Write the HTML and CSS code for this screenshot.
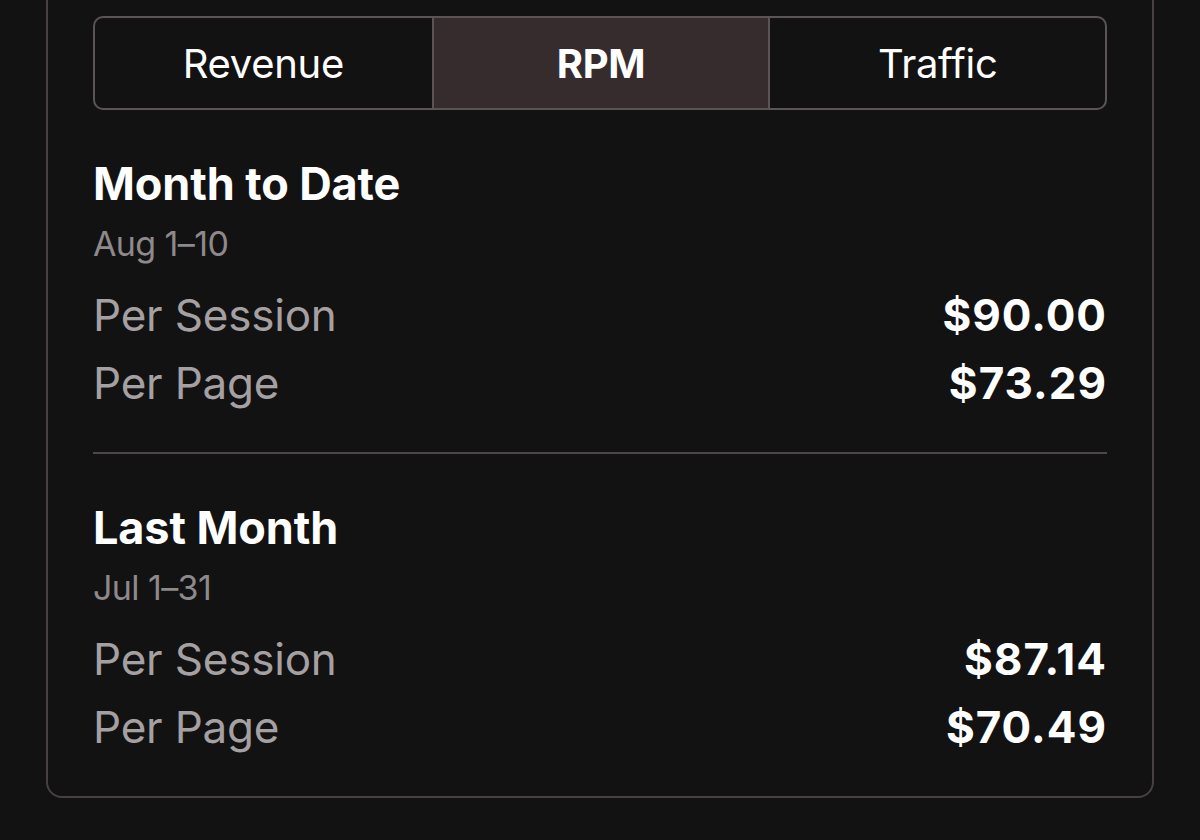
FILE: index.html
```html
<!DOCTYPE html>
<html lang="en">
<head>
    <meta charset="UTF-8">
    <meta name="viewport" content="width=device-width, initial-scale=1.0">
    <title>RPM Overview</title>
    <link rel="stylesheet" href="styles.css">
</head>
<body>
    <div class="card">
        <div class="tabs">
            <button class="tab">Revenue</button>
            <button class="tab active">RPM</button>
            <button class="tab">Traffic</button>
        </div>

        <div class="period">
            <h2>Month to Date</h2>
            <p class="range">Aug 1–10</p>
            <div class="row">
                <span class="label">Per Session</span>
                <span class="value">$90.00</span>
            </div>
            <div class="row">
                <span class="label">Per Page</span>
                <span class="value">$73.29</span>
            </div>
        </div>

        <div class="period">
            <h2>Last Month</h2>
            <p class="range">Jul 1–31</p>
            <div class="row">
                <span class="label">Per Session</span>
                <span class="value">$87.14</span>
            </div>
            <div class="row">
                <span class="label">Per Page</span>
                <span class="value">$70.49</span>
            </div>
        </div>
    </div>
</body>
</html>
```

FILE: styles.css
```css
body {
    font-family: Inter, 'Noto Sans', sans-serif;
    background: #131213;
    color: #fff;
    margin: 0;
    padding: 0 46px;
}

.card {
    margin-top: -40px;
    padding: 54px 45px 0;
    border: 2px solid #483f44;
    border-radius: 16px;
}

.tabs {
    display: grid;
    grid-template-columns: repeat(3, 1fr);
    height: 94px;
    box-sizing: border-box;
    border: 2px solid #5b5457;
    border-radius: 10px;
    overflow: hidden;
}

.tab {
    background: transparent;
    border: none;
    color: #fff;
    font-family: inherit;
    font-size: 40px;
    font-weight: 400;
    letter-spacing: -0.3px;
    cursor: pointer;
}

.tab + .tab {
    border-left: 2px solid #5b5457;
}

.tab.active {
    background: #362c2e;
    font-weight: 700;
}

.period {
    padding: 47px 0 35px;
}

.period + .period {
    border-top: 2px solid #4d4749;
}

.period h2 {
    margin: 0;
    font-size: 45px;
    line-height: 54px;
    font-weight: 700;
    letter-spacing: -0.1px;
}

.range {
    margin: 13px 0 17px;
    font-size: 34px;
    line-height: 40px;
    color: #8e898b;
    letter-spacing: -0.6px;
}

.row {
    display: flex;
    justify-content: space-between;
    align-items: baseline;
    font-size: 44px;
    line-height: 68px;
}

.label {
    color: #a5a0a2;
    letter-spacing: -0.2px;
}

.value {
    font-weight: 700;
    letter-spacing: 1px;
}
```
